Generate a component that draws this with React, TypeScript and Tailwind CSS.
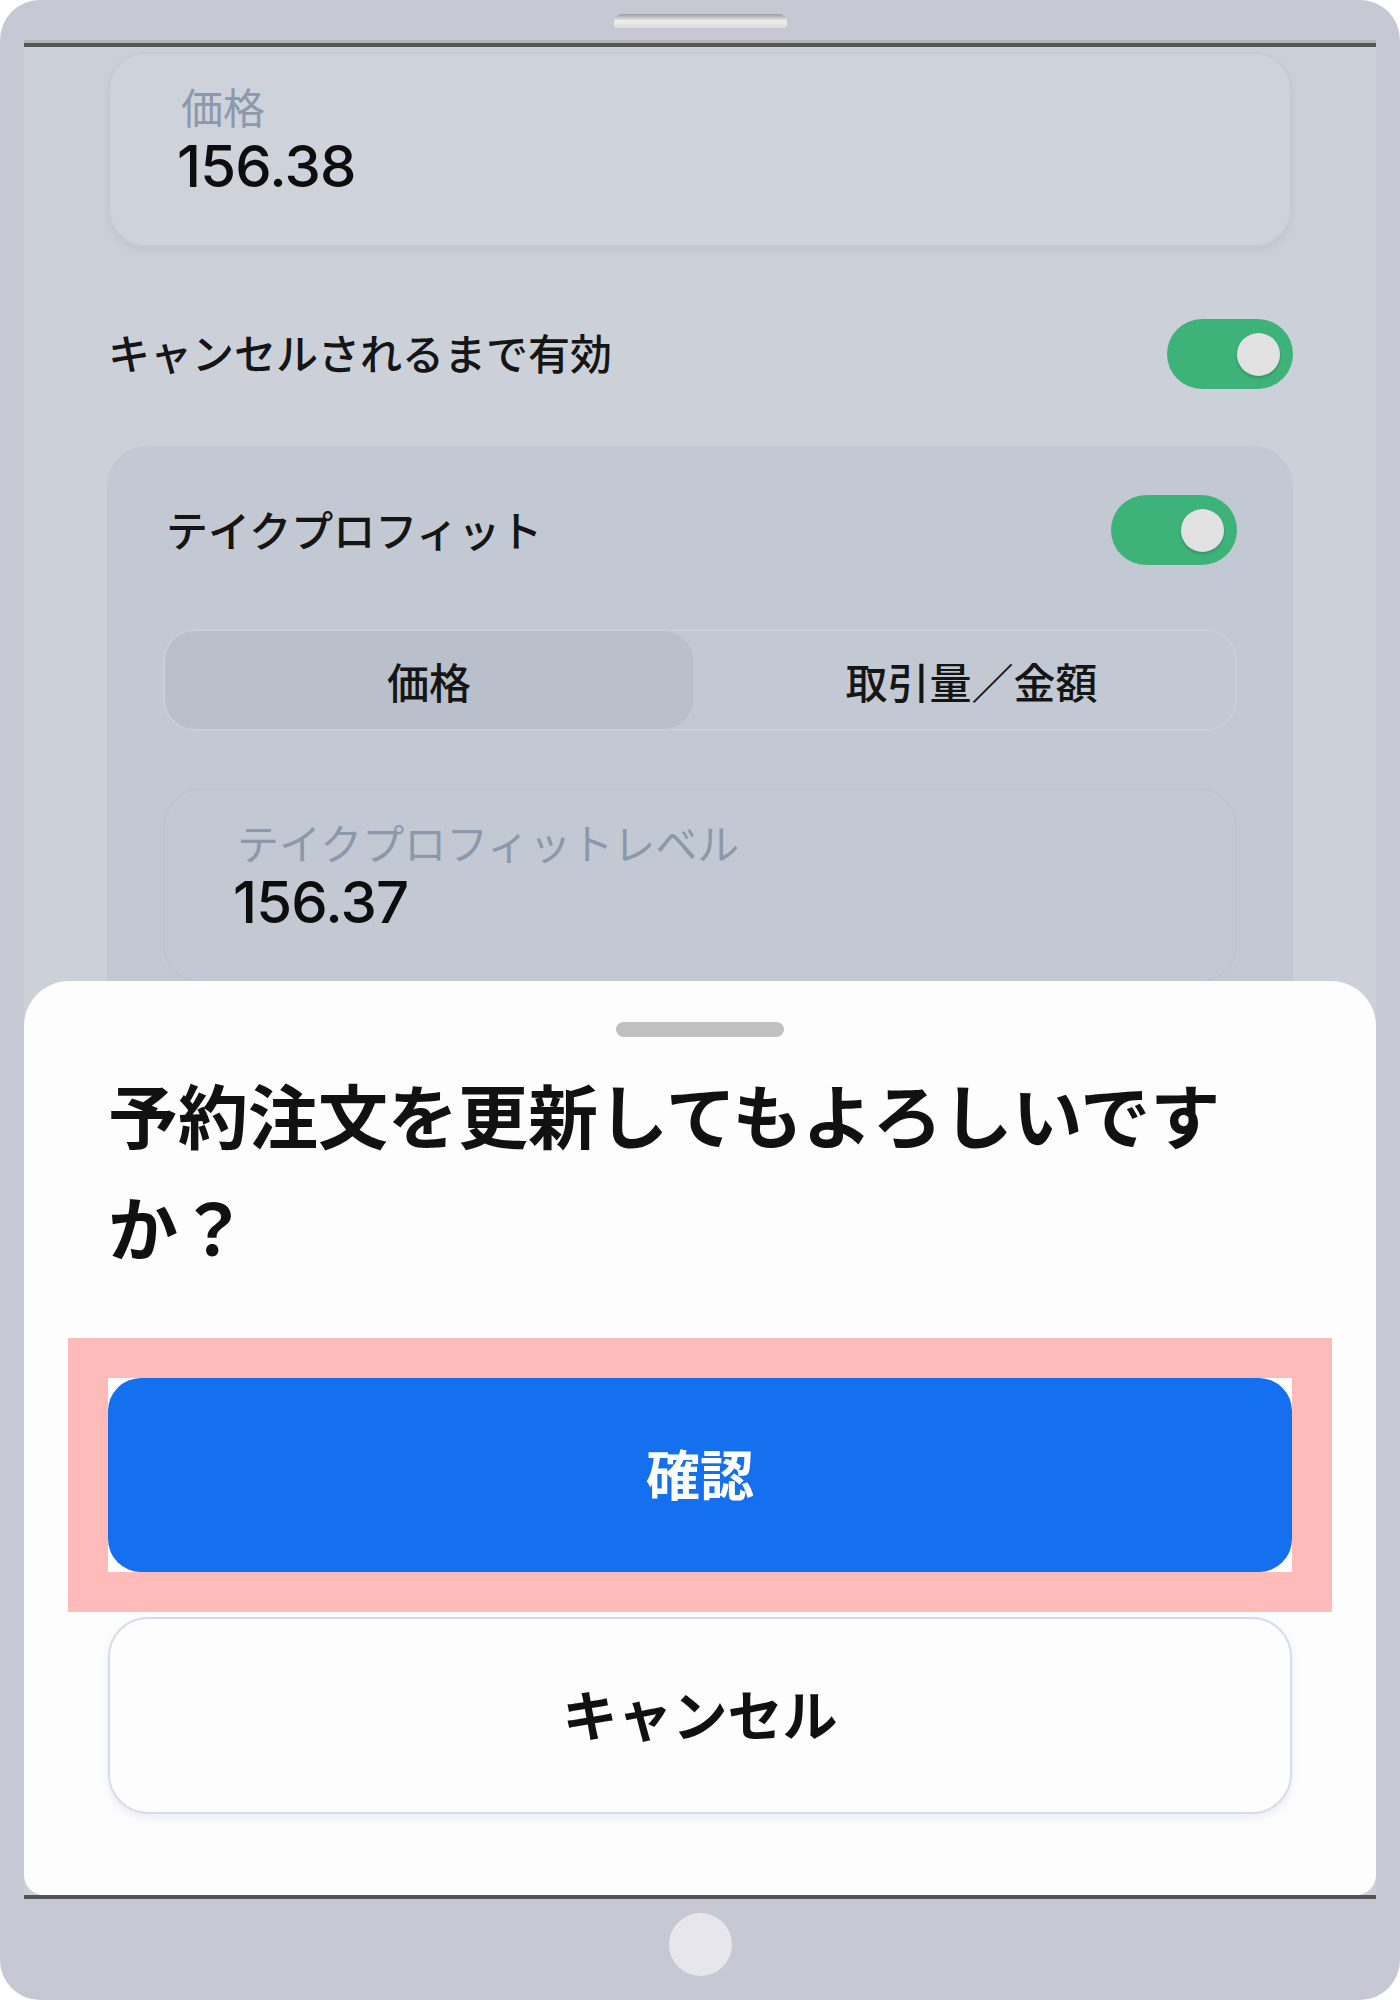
import React from 'react'

const jp = "font-['Noto_Sans_CJK_JP','Noto_Sans',sans-serif]"
const num = "font-['Inter','Noto_Sans_CJK_JP',sans-serif]"

function Toggle() {
  return (
    <div className="flex h-[70px] w-[126px] shrink-0 items-center justify-end rounded-full bg-[#3db37a] pr-[13px]">
      <div className="h-[43px] w-[43px] rounded-full bg-[#e2e2e3] shadow-[0_2px_3px_rgba(0,0,0,0.18)]" />
    </div>
  )
}

function Field({ label, value, className }: { label: string; value: string; className: string }) {
  return (
    <div className={`h-[195px] rounded-[38px] border-2 pt-[28px] ${className}`}>
      <div className={`${jp} text-[42px] leading-[48px] text-[#8c99ad]`}>{label}</div>
      <div className={`${num} mt-[4px] -ml-[4px] text-[58px] font-medium leading-[64px] tracking-[-0.8px] text-[#0d0d0d]`}>
        {value}
      </div>
    </div>
  )
}

export default function App() {
  return (
    <div className="h-[2000px] w-[1400px] bg-white">
      <div className="flex h-full w-full flex-col rounded-[40px] bg-[#c8c8d4]">
        {/* top bezel */}
        <div className="flex h-[40px] justify-center pt-[14px]">
          <div className="h-[14px] w-[173px] rounded-t-[8px] rounded-b-[3px] bg-linear-to-b from-[#9c9c9c] via-[#f0f0f0] to-[#dadada]" />
        </div>

        <div className="mx-[24px] flex flex-col">
          <div className="h-[3px] bg-[#b4b4b4]" />
          <div className="h-[4px] bg-[#555555]" />

          {/* screen */}
          <div className="relative h-[1848px] overflow-hidden bg-[#ccd1d9]">
            <Field
              label="価格"
              value="156.38"
              className="mx-[84px] mt-[5px] border-[#c5cbd4] bg-[#ced2da] pl-[71px] shadow-[0_4px_8px_rgba(150,160,175,0.25)]"
            />

            <div className="mx-[83px] mt-[72px] flex items-center justify-between pl-[1px]">
              <span className={`${jp} -mt-[6px] text-[42px] font-medium text-[#151515]`}>キャンセルされるまで有効</span>
              <Toggle />
            </div>

            <div className="mx-[83px] mt-[57px] rounded-[40px] bg-[#c3c9d2] px-[56px] pt-[49px] pb-[80px]">
              <div className="flex items-center justify-between">
                <span className={`${jp} -mt-[4px] pl-[3px] text-[42px] font-medium text-[#151515]`}>テイクプロフィット</span>
                <Toggle />
              </div>

              <div className="mt-[64px] grid h-[102px] grid-cols-2 rounded-[32px] border-2 border-[#c9ced7] bg-[#c3c9d2]">
                <div className={`${jp} mr-[7px] flex items-center justify-center rounded-[30px] bg-[#b9c0cc] text-[42px] font-medium text-[#151515]`}>
                  価格
                </div>
                <div className={`${jp} flex items-center justify-center pl-[8px] text-[42px] font-medium text-[#151515]`}>
                  取引量／金額
                </div>
              </div>

              <Field
                label="テイクプロフィットレベル"
                value="156.37"
                className="mt-[57px] border-[#bec5cf] bg-[#c3c9d2] pl-[72px]"
              />
            </div>

            {/* bottom sheet */}
            <div className="absolute inset-x-0 top-[934px] bottom-0 flex flex-col rounded-t-[45px] rounded-b-[20px] bg-[#fdfdfe]">
              <div className="mx-auto mt-[41px] h-[15px] w-[168px] rounded-full bg-[#c0c0c0]" />

              <h1 className={`${jp} mt-[21px] px-[84px] text-[70px] font-bold leading-[112px] text-[#111111]`}>
                予約注文を更新してもよろしいですか？
              </h1>

              <div className="mx-[44px] mt-[56px] bg-[#ffbaba] p-[40px]">
                <div className="bg-white">
                  <button className={`${jp} flex h-[194px] w-full items-center justify-center rounded-[33px] bg-[#1570ef] pb-[6px] text-[54px] font-bold text-white`}>
                    確認
                  </button>
                </div>
              </div>

              <button className={`${jp} mx-[84px] mt-[5px] flex h-[197px] items-center justify-center rounded-[40px] border-2 border-[#d6dcea] bg-[#fdfdfe] pb-[6px] text-[55px] font-bold text-[#111111] shadow-[0_4px_8px_rgba(180,190,210,0.25)]`}>
                キャンセル
              </button>
            </div>
          </div>

          <div className="h-[4px] bg-[#555555]" />
        </div>

        {/* bottom bezel */}
        <div className="flex justify-center pt-[14px]">
          <div className="h-[63px] w-[63px] rounded-full bg-[#e6e6ec]" />
        </div>
      </div>
    </div>
  )
}
